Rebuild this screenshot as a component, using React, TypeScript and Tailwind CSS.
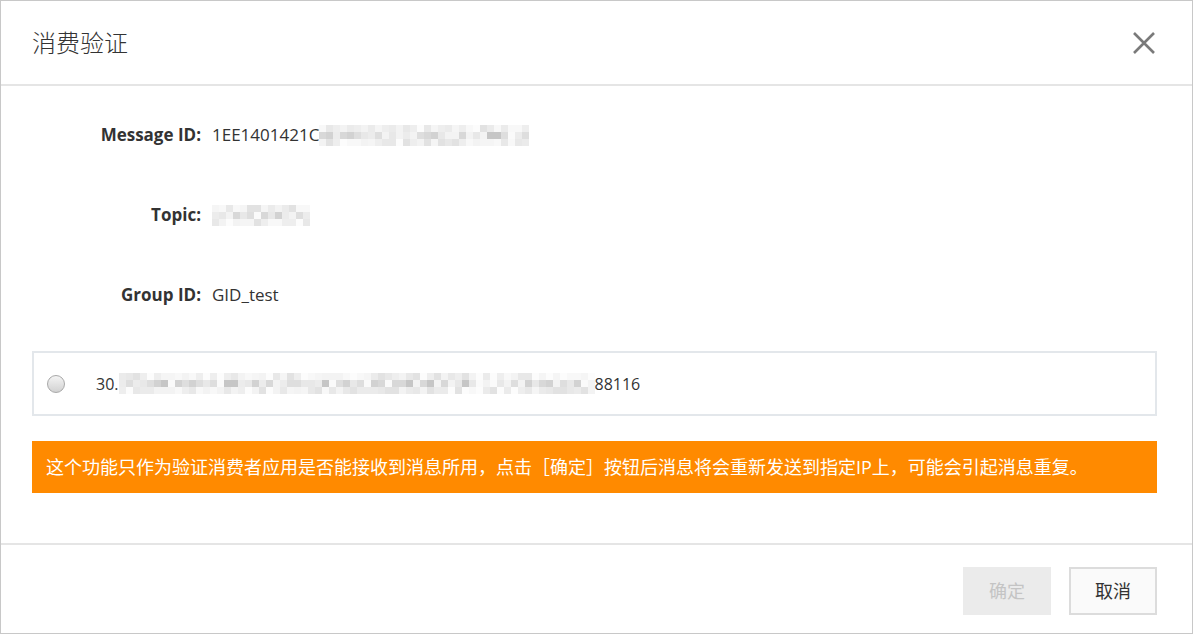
import React from "react";

const shades = [
  "bg-[#f3f3f3]",
  "bg-[#e8e8e8]",
  "bg-[#dedede]",
  "bg-[#d2d2d2]",
  "bg-[#c6c6c6]",
  "bg-[#ececec]",
  "bg-[#d8d8d8]",
  "bg-[#fafafa]",
];

// cheap pseudo random so the mosaic doesn't look striped
function pick(c: number, r: number, seed: number) {
  let h = (c + 1) * 374761393 + (r + 1) * 668265263 + seed * 2147483647;
  h = (h ^ (h >>> 13)) * 1274126177;
  h = h ^ (h >>> 16);
  return Math.abs(h) % shades.length;
}

// pixelated masking block for hidden values
function Mosaic({ cols, seed }: { cols: number; seed: number }) {
  const rows = [0, 1, 2];
  return (
    <span className="inline-flex flex-col align-middle">
      {rows.map((r) => (
        <span key={r} className={r === 1 ? "flex" : "flex opacity-50"}>
          {Array.from({ length: cols }).map((_, c) => (
            <span key={c} className={`h-[7px] w-[7px] ${shades[pick(c, r, seed)]}`} />
          ))}
        </span>
      ))}
    </span>
  );
}

function Row({ label, children }: { label: string; children: React.ReactNode }) {
  return (
    <div className="flex h-[80px] items-center">
      <div className="w-[180px] pr-[11px] text-right text-[17px] font-bold text-[#333]">{label}</div>
      <div className="flex items-center text-[17px] text-[#333]">{children}</div>
    </div>
  );
}

export default function App() {
  return (
    <div
      className="flex h-[634px] w-[1193px] flex-col border border-[#c8c8c8] bg-white"
      style={{ fontFamily: '"Open Sans", "Noto Sans CJK SC", sans-serif' }}
    >
      <div className="flex h-[85px] shrink-0 items-center justify-between border-b-2 border-[#e5e5e5] pl-[31px] pr-[36px]">
        <h2 className="text-[24px] font-light text-[#333]">消费验证</h2>
        <svg width="24" height="24" viewBox="0 0 24 24" className="text-[#7a7a7a]">
          <path d="M2 2 L22 22 M22 2 L2 22" stroke="currentColor" strokeWidth="2.6" />
        </svg>
      </div>

      <div className="flex flex-1 flex-col pl-[31px] pr-[35px] pt-[9px]">
        <Row label="Message ID:">
          <span>1EE1401421C</span>
          <Mosaic cols={30} seed={1} />
        </Row>
        <Row label="Topic:">
          <Mosaic cols={14} seed={3} />
        </Row>
        <Row label="Group ID:">
          <span>GID_test</span>
        </Row>

        <div className="mt-[16px] flex h-[65px] items-center border-2 border-[#e3e7eb] pl-[13px]">
          <span className="h-[18px] w-[18px] rounded-full border border-[#a8a8a8] bg-gradient-to-b from-[#f4f4f4] to-[#d2d2d2]" />
          <span className="ml-[31px] flex items-center text-[16px] text-[#333]">
            <span>30.</span>
            <Mosaic cols={68} seed={2} />
            <span>88116</span>
          </span>
        </div>

        <div className="mt-[25px] flex h-[52px] items-center bg-[#ff8a00] pl-[14px] text-[18px] text-white">
          这个功能只作为验证消费者应用是否能接收到消息所用，点击［确定］按钮后消息将会重新发送到指定IP上，可能会引起消息重复。
        </div>
      </div>

      <div className="flex h-[90px] shrink-0 items-start justify-end gap-[18px] border-t-2 border-[#e5e5e5] pr-[35px] pt-[22px]">
        <button className="h-[48px] w-[88px] bg-[#ebebeb] text-[18px] text-[#c4c4c4]">确定</button>
        <button className="h-[48px] w-[88px] border-2 border-[#dcdcdc] bg-[#fafafa] text-[18px] text-[#333]">取消</button>
      </div>
    </div>
  );
}
